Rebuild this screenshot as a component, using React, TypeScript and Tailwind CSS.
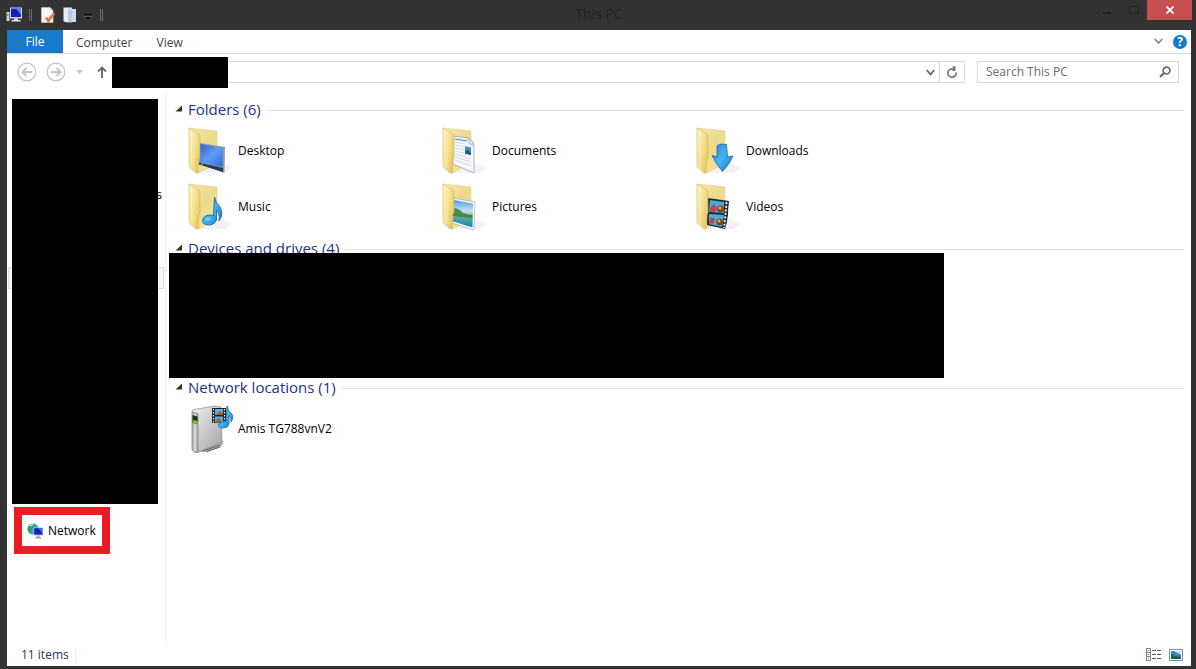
import type { ReactNode } from "react"

function FolderBack() {
  return (
    <>
      <path d="M12 46 L34 36 L46 41 L38 46 Z" fill="#000" opacity="0.05" />
      <path d="M2 1 L30 4 V37 L11 46 Z" fill="url(#folderBack)" stroke="#dcc878" strokeWidth="0.5" />
    </>
  )
}

function FolderFront() {
  return (
    <path
      d="M2 1 L12 7 Q13 8 13 9 V30 L11.500 32 L11 46 L9 46 L2 39.500 Z"
      fill="url(#folderFront)"
      stroke="#cfb65c"
      strokeWidth="0.6"
    />
  )
}

function Folder({ children }: { children: ReactNode }) {
  return (
    <svg viewBox="0 0 48 48" className="size-12 shrink-0" aria-hidden="true">
      <FolderBack />
      {children}
      <FolderFront />
    </svg>
  )
}

// Gradients shared by all the item icons
function IconDefs() {
  return (
    <svg className="absolute size-0" aria-hidden="true">
      <defs>
        <linearGradient id="folderBack" x1="0" y1="0" x2="1" y2="1">
          <stop offset="0" stopColor="#f6ebb4" />
          <stop offset="0.5" stopColor="#ecda8c" />
          <stop offset="1" stopColor="#f5e6a0" />
        </linearGradient>
        <linearGradient id="folderFront" x1="0" y1="0" x2="1" y2="0.6">
          <stop offset="0" stopColor="#fdf6cc" />
          <stop offset="0.6" stopColor="#f5e28e" />
          <stop offset="1" stopColor="#e3c65f" />
        </linearGradient>
        <linearGradient id="screen" x1="0" y1="0" x2="1" y2="1">
          <stop offset="0" stopColor="#2e62c9" />
          <stop offset="0.5" stopColor="#5f9bf5" />
          <stop offset="1" stopColor="#2f69d8" />
        </linearGradient>
        <linearGradient id="blue" x1="0" y1="0" x2="1" y2="1">
          <stop offset="0" stopColor="#2d86cc" />
          <stop offset="0.5" stopColor="#45b4ee" />
          <stop offset="1" stopColor="#1b76c4" />
        </linearGradient>
        <linearGradient id="photo" x1="0" y1="0" x2="0" y2="1">
          <stop offset="0" stopColor="#4b9be0" />
          <stop offset="0.4" stopColor="#c8e6f5" />
          <stop offset="0.6" stopColor="#5fae9a" />
          <stop offset="1" stopColor="#1b7db5" />
        </linearGradient>
        <linearGradient id="metal" x1="0" y1="0" x2="1" y2="1">
          <stop offset="0" stopColor="#f4f4f4" />
          <stop offset="0.5" stopColor="#c9c9cb" />
          <stop offset="1" stopColor="#a4a4a8" />
        </linearGradient>
      </defs>
    </svg>
  )
}

function DesktopIcon() {
  return (
    <Folder>
      <path d="M13 16 L38 20 L37.500 46 L12 37 Z" fill="#8f9aa8" />
      <path d="M13 17 L36 21 L35.500 40 L13 35 Z" fill="url(#screen)" />
      <path d="M12 35.500 L36 41 V45 L12 37.500 Z" fill="#2b3d55" />
      <path d="M14 37 L16 37.500" stroke="#6fd36f" />
    </Folder>
  )
}

function DocumentsIcon() {
  return (
    <Folder>
      <path d="M12 9 L27 11 Q32 13 33 19 V46 L12 37 Z" fill="#f6f8fd" stroke="#98a3bb" strokeWidth="0.8" />
      <path d="M14 12 L26 14" stroke="#3f8fa8" strokeWidth="1.2" />
      <path
        d="M14 15 L24 17 M14 18 L23 20 M14 21 L23 23 M14 24 L23 26 M14 27 L30 32 M14 30 L30 35 M14 33 L30 39"
        stroke="#cdd2e0"
        strokeWidth="0.9"
      />
      <path d="M24 19 L30 20.500 V28 L24 26.500 Z" fill="#4a8fd6" />
      <path d="M24 24 L27 23 L30 26 V28 L24 26.500 Z" fill="#1f5b66" />
      <path d="M27 11 L28 17 L33 19 Q32 13 27 11 Z" fill="#d9e1f2" stroke="#98a3bb" strokeWidth="0.6" />
    </Folder>
  )
}

function DownloadsIcon() {
  return (
    <Folder>
      <path
        d="M22 18.500 Q26 16 31.500 17.500 L32.500 30 L38 29 Q34 38 27.500 44.500 Q21 37 17 28.500 L22 30 Z"
        fill="url(#blue)"
        stroke="#1967a8"
        strokeWidth="0.8"
      />
    </Folder>
  )
}

function MusicIcon() {
  return (
    <Folder>
      <path
        d="M27.500 14 Q28.500 20 33 24 Q37 31 32 38 Q33 30 29.500 27 L29.500 36 Q29 41 22.500 42 Q15.500 42 15.500 37.500 Q16 32.500 23 32 Q25.500 32 26.500 33 Z"
        fill="url(#blue)"
        stroke="#1f70b4"
        strokeWidth="1"
      />
      <ellipse cx="21" cy="36" rx="3" ry="1.6" fill="#8fd4f6" opacity="0.7" />
    </Folder>
  )
}

function PicturesIcon() {
  return (
    <Folder>
      <path d="M12 15 L34 19 L33 47 L11 40 Z" fill="#fff" stroke="#a9b1ba" strokeWidth="0.8" />
      <path d="M13 17 L32 20.500 L31.500 44.500 L12 38.500 Z" fill="url(#photo)" />
      <path d="M12 25 Q18 25 22 30 Q26 32 31.500 32 V35 L12 33 Z" fill="#3d7d3c" opacity="0.85" />
    </Folder>
  )
}

function VideosIcon() {
  return (
    <Folder>
      <path d="M13 15 L34 18 Q33 26 33 32 Q32 40 30 46 L12 42 Z" fill="#262a2e" />
      <path d="M15 17 L29 19 V30 L14 29 Z" fill="#4aa8dc" />
      <path d="M14 31 L29 32 L27 44 L14 41 Z" fill="#4aa8dc" />
      <path d="M15 25 L19 21 L22 25 L20 29 L15 29 Z M16 34 L20 36 L18 41 L14 40 Z" fill="#b8454f" />
      <circle cx="25.500" cy="26" r="3.400" fill="#8a3d12" />
      <circle cx="25" cy="25" r="1.600" fill="#f0a92d" />
      <circle cx="24.500" cy="39" r="3.200" fill="#8a3d12" />
      <circle cx="24" cy="38" r="1.500" fill="#f0a92d" />
      <path d="M31.500 19 Q30.500 34 29 45" fill="none" stroke="#f2f2f2" strokeWidth="1.800" strokeDasharray="2 1.600" />
    </Folder>
  )
}

function MediaServerIcon() {
  return (
    <svg viewBox="0 0 48 48" className="size-12 shrink-0" aria-hidden="true">
      <path d="M12 47 L20 42 L37 36 L34 42 L20 47 Z" fill="#77777b" opacity="0.6" />
      <path d="M16 46 L33 40 M20 46.500 L33 42" stroke="#4d4d50" strokeWidth="0.8" />
      <path d="M5 6 Q5 5 7 4.500 L28 1 L34 2 L35 37 L11 47 Z" fill="url(#metal)" stroke="#8c8c90" strokeWidth="0.7" />
      <path d="M5 7 Q8 7 11 9 L11 48 Q7 48 5 45 Z" fill="#b4b4b8" stroke="#7e7e82" strokeWidth="0.7" />
      <path d="M8 9 V46" stroke="#e9e9ec" strokeWidth="1.400" />
      <path d="M5.500 10 L10.500 11.500 V19 L5.500 18 Z" fill="#27301f" />
      <path d="M6 15 L10.500 16 V19 L6 18 Z" fill="#6fd321" />
      <rect x="25" y="3" width="14" height="15" fill="#1d2226" />
      <rect x="28" y="4" width="8" height="6" fill="#5aaede" />
      <rect x="28" y="11.500" width="8" height="6" fill="#5aaede" />
      <path d="M30 9 L33 6 L36 8 V10 H29 Z M29 15 L32 13 L35 17 H29 Z" fill="#b25a2c" />
      <path d="M26.500 4 V18 M37.500 4 V18" stroke="#eee" strokeWidth="1.200" strokeDasharray="1.600 1.400" />
      <path
        d="M40 1 Q41 6 44 8 Q47.500 12 44 17 Q44.500 12 42 10.500 V19 Q41 23 36 23 Q31.500 23 31.500 20 Q32 17 36.500 16.500 L39 17 Z"
        fill="url(#blue)"
        stroke="#1f70b4"
        strokeWidth="0.9"
      />
    </svg>
  )
}

function PcIcon() {
  return (
    <svg viewBox="0 0 16 16" className="size-4" aria-hidden="true">
      <rect x="0.500" y="5" width="3" height="9" fill="#c9d3cf" />
      <rect x="1" y="7" width="1.500" height="2" fill="#55b73b" />
      <rect x="4" y="0.500" width="12" height="11" fill="#cfd6e6" />
      <rect x="5" y="1.500" width="10" height="8.500" fill="#1420b4" />
      <path d="M10 1.500 H15 V8 Z" fill="#5f83ec" />
      <path d="M8 11.500 h4 v1.500 h2.500 v1.500 h-9 v-1.500 H8 Z" fill="#dfe3ea" />
    </svg>
  )
}

function PropertiesIcon() {
  return (
    <svg viewBox="0 0 16 16" className="size-4" aria-hidden="true">
      <path d="M1.500 0.500 H10 L13 3.500 V15.500 H1.500 Z" fill="#f7f7f7" stroke="#c8c8c8" strokeWidth="0.6" />
      <path d="M10 0.500 V3.500 H13 Z" fill="#cfcfcf" />
      <path d="M6 10.500 L8.500 14 Q11 9.500 14.500 6.500" fill="none" stroke="#e2703f" strokeWidth="2.600" />
    </svg>
  )
}

function NewFolderIcon() {
  return (
    <svg viewBox="0 0 16 16" className="size-4" aria-hidden="true">
      <path d="M5 0.500 H10 V2 H14 V15 H5 Z" fill="#cbdcf0" />
      <path d="M1.500 0.500 H6 V15.500 L1.500 14.500 Z" fill="#e6eef9" />
      <path d="M6 3 H10 V15.500 H6 Z" fill="#b3c9e4" />
    </svg>
  )
}

function NetworkIcon() {
  return (
    <svg viewBox="0 0 16 16" className="size-4 shrink-0" aria-hidden="true">
      <circle cx="6" cy="6" r="5.600" fill="#3d9fd8" />
      <path d="M1 4 Q4 0 8 0.800 Q9 3 6 4 Q4 6 5 8 Q3 11 1.500 9 Q0 6 1 4 Z" fill="#2fa25a" />
      <path d="M3 3 Q5 1.500 6.500 2" stroke="#c8f3ee" strokeWidth="1.200" fill="none" />
      <rect x="6.500" y="4.500" width="9.500" height="8" fill="#b5bfd8" />
      <rect x="7.200" y="5.200" width="8.100" height="6.400" fill="#1420b4" />
      <path d="M11 5.200 H15.300 V10 Z" fill="#4a6fe4" />
      <path d="M10 12.500 h2.500 v1.500 h1.500 v1.500 h-5.500 v-1.500 H10 Z" fill="#9aa2b8" />
    </svg>
  )
}

const folders = [
  { name: "Desktop", icon: <DesktopIcon /> },
  { name: "Documents", icon: <DocumentsIcon /> },
  { name: "Downloads", icon: <DownloadsIcon /> },
  { name: "Music", icon: <MusicIcon /> },
  { name: "Pictures", icon: <PicturesIcon /> },
  { name: "Videos", icon: <VideosIcon /> },
]

function GroupHeader({ title }: { title: string }) {
  return (
    <h2 className="flex h-[25px] items-center gap-[6px] pl-[9px] pr-[7px]">
      <button type="button" className="flex items-center gap-[6px] pb-1 text-[15px] leading-5 text-[#1e3287]">
        <svg viewBox="0 0 7 7" className="size-[7px]" aria-hidden="true">
          <path d="M7 0.500 V6.500 H0.500 Z" fill="#333" />
        </svg>
        {title}
      </button>
      <span className="h-px flex-1 bg-[#e2e2e2]" />
    </h2>
  )
}

function Item({ name, icon }: { name: string; icon: ReactNode }) {
  return (
    <button type="button" className="flex h-14 items-center gap-[3px] text-left">
      {icon}
      <span>{name}</span>
    </button>
  )
}

function TitleBar() {
  return (
    <header className="grid h-[30px] grid-cols-[1fr_auto_1fr] items-start pl-[6px] pr-1">
      <div className="flex h-[30px] items-center">
        <PcIcon />
        <span className="ml-[7px] mr-2 h-3 w-[3px] border-x border-[#6b6b6b]" />
        <button type="button" aria-label="Properties">
          <PropertiesIcon />
        </button>
        <button type="button" aria-label="New folder" className="ml-[6px]">
          <NewFolderIcon />
        </button>
        <button type="button" aria-label="Customize Quick Access Toolbar" className="ml-[6px] mr-2 pt-1">
          <svg viewBox="0 0 8 8" className="size-2" aria-hidden="true">
            <path d="M0 1.500 H8" stroke="#000" />
            <path d="M0 3.500 H8 L4 7.500 Z" fill="#000" stroke="#999" strokeWidth="0.5" />
          </svg>
        </button>
        <span className="h-3 w-[3px] border-x border-[#6b6b6b]" />
      </div>
      <h1 className="text-[14px] leading-7 text-[#222]">This PC</h1>
      <div className="flex h-5 justify-end">
        <button type="button" aria-label="Minimize" className="flex w-[27px] items-center justify-center">
          <svg viewBox="0 0 10 10" className="size-[10px]" aria-hidden="true">
            <path d="M1 8 H9" stroke="#222" strokeWidth="2" />
          </svg>
        </button>
        <button type="button" aria-label="Maximize" className="flex w-[27px] items-center justify-center">
          <svg viewBox="0 0 10 10" className="size-[10px]" aria-hidden="true">
            <path d="M0.500 1.500 H9.500 V8.500 H0.500 Z" fill="none" stroke="#222" />
          </svg>
        </button>
        <button type="button" aria-label="Close" className="flex w-[45px] items-center justify-center bg-[#c75050]">
          <svg viewBox="0 0 8 8" className="size-2" aria-hidden="true">
            <path d="M0.500 0.500 L7.500 7.500 M7.500 0.500 L0.500 7.500" stroke="#fff" strokeWidth="1.700" />
          </svg>
        </button>
      </div>
    </header>
  )
}

function Ribbon() {
  return (
    <div className="flex h-6 items-stretch border-b border-[#dadbdc] text-[#444]">
      <button type="button" className="w-14 bg-[#1979ca] text-white">
        File
      </button>
      <button type="button" className="ml-[5px] px-2 pt-[2px]">
        Computer
      </button>
      <button type="button" className="ml-2 px-2 pt-[2px]">
        View
      </button>
      <div className="ml-auto flex items-center gap-[10px] pr-1">
        <button type="button" aria-label="Expand the Ribbon">
          <svg viewBox="0 0 9 7" className="h-[7px] w-[9px]" aria-hidden="true">
            <path d="M0.800 1 L4.500 5 L8.200 1" fill="none" stroke="#8a8a8a" strokeWidth="1.800" />
          </svg>
        </button>
        <button
          type="button"
          aria-label="Help"
          className="flex size-[14px] items-center justify-center rounded-full bg-[#1979ca] text-[12px] font-bold leading-[14px] text-white"
        >
          ?
        </button>
      </div>
    </div>
  )
}

function NavArrow({ label, d }: { label: string; d: string }) {
  return (
    <button type="button" aria-label={label}>
      <svg viewBox="0 0 20 20" className="size-5" aria-hidden="true">
        <circle cx="10" cy="10" r="8.800" fill="none" stroke="#c3c3c3" strokeWidth="1.200" />
        <path d={d} fill="none" stroke="#c3c3c3" strokeWidth="1.800" />
      </svg>
    </button>
  )
}

function AddressRow() {
  return (
    <div className="mb-[2px] flex h-9 items-center pl-[10px] pr-3">
      <NavArrow label="Back" d="M15 10 H6 M9.500 6 L5.500 10 L9.500 14" />
      <span className="w-[9px]" />
      <NavArrow label="Forward" d="M5 10 H14 M10.500 6 L14.500 10 L10.500 14" />
      <button type="button" aria-label="Recent locations" className="ml-[10px]">
        <svg viewBox="0 0 7 4" className="h-1 w-[7px]" aria-hidden="true">
          <path d="M0 0 H7 L3.500 4 Z" fill="#c8c8c8" />
        </svg>
      </button>
      <button type="button" aria-label="Up" className="ml-[14px]">
        <svg viewBox="0 0 10 12" className="h-3 w-[10px]" aria-hidden="true">
          <path d="M5 12 V1.500 M1 5.500 L5 1.500 L9 5.500" fill="none" stroke="#6a6a6a" strokeWidth="1.900" />
        </svg>
      </button>
      <div className="relative ml-[10px] flex h-[22px] min-w-0 flex-1 border border-[#d9d9d9]">
        <input aria-label="Address" className="min-w-0 flex-1 px-2 outline-none" />
        <span className="absolute -left-[6px] -top-[5px] h-[31px] w-[116px] bg-black" />
        <button type="button" aria-label="Previous locations" className="flex w-[18px] items-center justify-center">
          <svg viewBox="0 0 9 7" className="h-[7px] w-[9px]" aria-hidden="true">
            <path d="M0.800 1 L4.500 5.500 L8.200 1" fill="none" stroke="#6a6a6a" strokeWidth="1.900" />
          </svg>
        </button>
        <button type="button" aria-label="Refresh" className="flex w-[25px] items-center justify-center border-l border-[#d9d9d9]">
          <svg viewBox="0 0 12 12" className="size-3" aria-hidden="true">
            <path d="M10.200 6.500 A4.200 4.200 0 1 1 6 2.800 H8" fill="none" stroke="#7a7a7a" strokeWidth="1.700" />
            <path d="M6 0.300 L9.500 0.300 L9.500 5 L6 5 L8 2.800 Z" fill="#7a7a7a" />
          </svg>
        </button>
      </div>
      <label className="ml-3 flex h-[22px] w-[202px] items-center border border-[#d9d9d9] pl-2 pr-[7px]">
        <input
          type="search"
          aria-label="Search This PC"
          placeholder="Search This PC"
          className="min-w-0 flex-1 outline-none placeholder:text-[#6d6d6d]"
        />
        <svg viewBox="0 0 12 12" className="size-3" aria-hidden="true">
          <circle cx="7.500" cy="4.500" r="3.400" fill="none" stroke="#6a6a6a" strokeWidth="1.700" />
          <path d="M5 7 L1 11" stroke="#6a6a6a" strokeWidth="2.200" />
        </svg>
      </label>
    </div>
  )
}

function Sidebar() {
  return (
    <nav className="w-[159px] shrink-0 border-r border-[#f0f0f0] pt-[7px]">
      <div className="relative h-[405px] px-px">
        <p className="pr-[2px] pt-[85px] text-right leading-[22px]">s</p>
        <div className="mt-[61px] h-[22px] border border-[#dedede] bg-[#f7f7f7]" />
        <div className="absolute inset-y-0 left-[5px] w-[146px] bg-black" />
      </div>
      <a
        href="#network"
        className="ml-[7px] mt-[3px] flex h-[47px] w-24 items-center gap-[5px] border-8 border-[#ed1c24] pl-[5px]"
      >
        <NetworkIcon />
        Network
      </a>
    </nav>
  )
}

function StatusBar() {
  return (
    <footer className="flex h-[23px] items-center pl-[14px] pr-2 text-[#1e395b]">
      <span>11 items</span>
      <span className="ml-[6px] h-3 w-px bg-[#ededed]" />
      <div className="ml-auto flex items-center gap-2">
        <button type="button" aria-label="Details view">
          <svg viewBox="0 0 15 13" className="h-[13px] w-[15px]" aria-hidden="true">
            <g fill="#fff" stroke="#7d8793">
              <rect x="0.500" y="0.500" width="4" height="4" />
              <rect x="0.500" y="4.500" width="4" height="4" />
              <rect x="0.500" y="8.500" width="4" height="4" />
            </g>
            <path
              d="M2 2.500 h1 M2 6.500 h1 M2 10.500 h1 M6 2.500 h4 M11 2.500 h4 M6 6.500 h4 M11 6.500 h4 M6 10.500 h4 M11 10.500 h4"
              stroke="#4d5b6b"
            />
          </svg>
        </button>
        <button type="button" aria-label="Large thumbnails view">
          <svg viewBox="0 0 14 12" className="h-3 w-[14px]" aria-hidden="true">
            <rect x="0.500" y="0.500" width="13" height="11" fill="#fff" stroke="#7b93a5" />
            <rect x="2" y="2" width="10" height="8" fill="#3f86bd" />
            <path d="M5 2 H12 V6 Z" fill="#bfe0f3" />
            <path d="M2 5 L6 7 L12 8 V10 H2 Z" fill="#1d5f5a" />
          </svg>
        </button>
      </div>
    </footer>
  )
}

export default function App() {
  return (
    <div className="flex min-h-screen flex-col bg-[#333] pb-[3px] font-['Open_Sans','Noto_Sans',sans-serif] text-[12px] leading-4 text-black">
      <IconDefs />
      <TitleBar />
      <div className="ml-[7px] mr-[5px] flex flex-1 flex-col bg-white">
        <Ribbon />
        <AddressRow />
        <div className="flex flex-1">
          <Sidebar />
          <main className="min-w-0 flex-1 pt-[6px]">
            <section className="mb-[2px]">
              <GroupHeader title="Folders (6)" />
              <div className="grid grid-cols-[repeat(3,254px)] pl-[21px]">
                {folders.map((folder) => (
                  <Item key={folder.name} name={folder.name} icon={folder.icon} />
                ))}
              </div>
            </section>
            <section className="relative mb-[2px]">
              <GroupHeader title="Devices and drives (4)" />
              <div className="h-28" />
              <div className="absolute left-[3px] top-4 h-[125px] w-[775px] bg-black" />
            </section>
            <section>
              <GroupHeader title="Network locations (1)" />
              <div className="grid grid-cols-[repeat(3,254px)] pl-[21px]">
                <Item name="Amis TG788vnV2" icon={<MediaServerIcon />} />
              </div>
            </section>
          </main>
        </div>
        <StatusBar />
      </div>
    </div>
  )
}
